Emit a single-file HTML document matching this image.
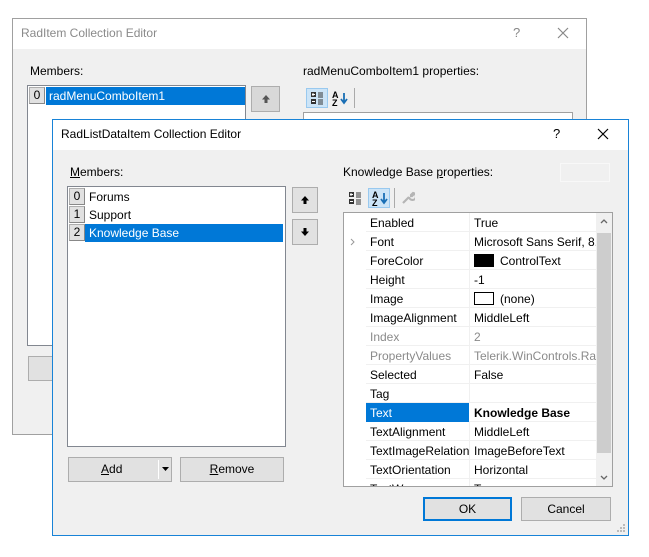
<!DOCTYPE html>
<html><head><meta charset="utf-8"><style>
*{box-sizing:border-box;margin:0;padding:0}
body{width:649px;height:557px;background:#fff;position:relative;overflow:hidden;font-family:"Liberation Sans",sans-serif;font-size:12px;color:#000}
.a{position:absolute}
.btn{position:absolute;background:#e1e1e1;border:1px solid #adadad;text-align:center;line-height:22px}
.idx{position:absolute;left:1px;width:16px;height:17px;background:#e1e1e1;border:1px solid #adadad;border-right-color:#888;border-bottom-color:#888;text-align:center;line-height:15px}
.row{position:absolute;left:22px;right:16px;height:19px;border-bottom:1px solid #f0f0f0}
.row .n{position:absolute;left:4px;top:3px}
.row .v{position:absolute;left:108px;top:3px;white-space:nowrap;overflow:hidden;width:122px}
.row .sep{position:absolute;left:103px;top:0;bottom:0;width:1px;background:#f0f0f0}
.g{color:#8a8a8a}
svg{display:block}
</style></head><body>
<!-- outer dialog -->
<div class="a" style="left:12px;top:18px;width:575px;height:417px;background:#f0f0f0;border:1px solid #a0a0a0"></div>
<div class="a" style="left:13px;top:19px;width:573px;height:30px;background:#fff"></div>
<div class="a" style="left:21px;top:26px;color:#8a8a8a;font-size:12px">RadItem Collection Editor</div>
<div class="a" style="left:513px;top:25px;color:#888;font-size:13px">?</div>
<svg class="a" style="left:557px;top:27px" width="12" height="12"><path d="M1 1L11 11M11 1L1 11" stroke="#888" stroke-width="1.2"/></svg>
<div class="a" style="left:30px;top:64px">Members:</div>
<div class="a" style="left:27px;top:85px;width:219px;height:261px;background:#fff;border:1px solid #828790"></div>
<div class="idx" style="left:29px;top:87px">0</div>
<div class="a" style="left:46px;top:87px;width:199px;height:18px;background:#0078d7;color:#fff;padding:2px 3px">radMenuComboItem1</div>
<div class="btn" style="left:251px;top:86px;width:29px;height:26px;background:#d8d8d8"><svg class="a" style="left:9px;top:7px" width="10" height="10"><path d="M5 1L9 5.5H6.5V9H3.5V5.5H1Z" fill="#555"/></svg></div>
<div class="btn" style="left:28px;top:356px;width:30px;height:25px"></div>
<div class="a" style="left:303px;top:64px">radMenuComboItem1 properties:</div>
<div class="a" style="left:306px;top:88px;width:22px;height:20px;background:#cce4f7;border:1px solid #99c9ef"></div>
<svg class="a" style="left:310px;top:91px" width="14" height="14"><path d="M1 1h5v5H1zM1 8h5v5H1z" fill="#333"/><path d="M3 2v3M2 3.5h3M2 10.5h3" stroke="#fff"/><path d="M8 2h5M8 4h5M8 6h5M8 9h5M8 11h5M8 13h5" stroke="#333"/></svg>
<div class="a" style="left:332px;top:91px;font-size:9px;font-weight:bold;line-height:8px">A<br>Z</div>
<svg class="a" style="left:340px;top:93px" width="8" height="12"><path d="M4 0V9M1 6L4 10L7 6" stroke="#1a6fb5" stroke-width="1.8" fill="none"/></svg>
<div class="a" style="left:354px;top:88px;width:1px;height:20px;background:#aaa"></div>
<div class="a" style="left:303px;top:112px;width:270px;height:20px;background:#fff;border:1px solid #a0a0a0"></div>

<!-- inner dialog -->
<div class="a" style="left:52px;top:119px;width:577px;height:417px;background:#f0f0f0;border:1px solid #1883d7"></div>
<div class="a" style="left:53px;top:120px;width:575px;height:30px;background:#fff"></div>
<div class="a" style="left:61px;top:127px;font-size:12px">RadListDataItem Collection Editor</div>
<div class="a" style="left:553px;top:126px;font-size:13px">?</div>
<svg class="a" style="left:597px;top:128px" width="12" height="12"><path d="M1 1L11 11M11 1L1 11" stroke="#000" stroke-width="1.2"/></svg>
<div class="a" style="left:70px;top:165px"><u>M</u>embers:</div>
<div class="a" style="left:67px;top:186px;width:219px;height:261px;background:#fff;border:1px solid #828790"></div>
<div class="idx" style="left:69px;top:188px">0</div><div class="a" style="left:89px;top:190px">Forums</div>
<div class="idx" style="left:69px;top:206px">1</div><div class="a" style="left:89px;top:208px">Support</div>
<div class="idx" style="left:69px;top:224px">2</div>
<div class="a" style="left:85px;top:224px;width:198px;height:18px;background:#0078d7;color:#fff;padding:2px 4px">Knowledge Base</div>
<div class="btn" style="left:292px;top:187px;width:26px;height:26px"><svg class="a" style="left:7px;top:7px" width="10" height="10"><path d="M5 1L9 5.5H6.5V9H3.5V5.5H1Z" fill="#000"/></svg></div>
<div class="btn" style="left:292px;top:219px;width:26px;height:26px"><svg class="a" style="left:7px;top:7px" width="10" height="10"><path d="M5 9L9 4.5H6.5V1H3.5V4.5H1Z" fill="#000"/></svg></div>
<div class="btn" style="left:68px;top:457px;width:104px;height:25px;text-align:left;padding-left:32px"><u>A</u>dd</div>
<div class="a" style="left:158px;top:460px;width:1px;height:19px;background:#fff"></div>
<svg class="a" style="left:162px;top:467px" width="7" height="4"><path d="M0 0H7L3.5 4Z" fill="#000"/></svg>
<div class="btn" style="left:180px;top:457px;width:104px;height:25px"><u>R</u>emove</div>
<div class="a" style="left:343px;top:165px">Knowledge Base <u>p</u>roperties:</div>
<div class="a" style="left:560px;top:163px;width:50px;height:19px;border:1px solid #f8f8f8"></div>
<svg class="a" style="left:348px;top:191px" width="14" height="14"><path d="M1 1h5v5H1zM1 8h5v5H1z" fill="#333"/><path d="M3 2v3M2 3.5h3M2 10.5h3" stroke="#fff"/><path d="M8 2h5M8 4h5M8 6h5M8 9h5M8 11h5M8 13h5" stroke="#333"/></svg>
<div class="a" style="left:368px;top:188px;width:22px;height:20px;background:#cce4f7;border:1px solid #99c9ef"></div>
<div class="a" style="left:372px;top:191px;font-size:9px;font-weight:bold;line-height:8px">A<br>Z</div>
<svg class="a" style="left:380px;top:193px" width="8" height="12"><path d="M4 0V9M1 6L4 10L7 6" stroke="#1a6fb5" stroke-width="1.8" fill="none"/></svg>
<div class="a" style="left:394px;top:188px;width:1px;height:20px;background:#aaa"></div>
<svg class="a" style="left:401px;top:191px" width="14" height="14"><path d="M2 12L8 6M8 6A3.5 3.5 0 1 0 12 2L10 4V5H11L13 3" stroke="#b5b5b5" stroke-width="2.2" fill="none"/></svg>
<!-- grid -->
<div class="a" style="left:343px;top:212px;width:270px;height:275px;background:#fff;border:1px solid #a0a0a0;overflow:hidden">
 <div class="row" style="top:0"><span class="n">Enabled</span><span class="sep"></span><span class="v">True</span></div>
 <svg class="a" style="left:6px;top:25px" width="5" height="8"><path d="M1 1L4 4L1 7" stroke="#999" fill="none"/></svg>
 <div class="row" style="top:19px"><span class="n">Font</span><span class="sep"></span><span class="v">Microsoft Sans Serif, 8.25</span></div>
 <div class="row" style="top:38px"><span class="n">ForeColor</span><span class="sep"></span><span class="v"><span style="display:inline-block;width:20px;height:13px;background:#000;vertical-align:-2px;margin-right:6px"></span>ControlText</span></div>
 <div class="row" style="top:57px"><span class="n">Height</span><span class="sep"></span><span class="v">-1</span></div>
 <div class="row" style="top:76px"><span class="n">Image</span><span class="sep"></span><span class="v"><span style="display:inline-block;width:20px;height:13px;border:1px solid #000;vertical-align:-2px;margin-right:6px"></span>(none)</span></div>
 <div class="row" style="top:95px"><span class="n">ImageAlignment</span><span class="sep"></span><span class="v">MiddleLeft</span></div>
 <div class="row g" style="top:114px"><span class="n">Index</span><span class="sep"></span><span class="v">2</span></div>
 <div class="row g" style="top:133px"><span class="n">PropertyValues</span><span class="sep"></span><span class="v">Telerik.WinControls.Rad</span></div>
 <div class="row" style="top:152px"><span class="n">Selected</span><span class="sep"></span><span class="v">False</span></div>
 <div class="row" style="top:171px"><span class="n">Tag</span><span class="sep"></span><span class="v"></span></div>
 <div class="row" style="top:190px"><span class="a" style="left:0;top:0;width:103px;height:19px;background:#0078d7"></span><span class="n" style="color:#fff">Text</span><span class="v" style="font-weight:bold">Knowledge Base</span></div>
 <div class="row" style="top:209px"><span class="n">TextAlignment</span><span class="sep"></span><span class="v">MiddleLeft</span></div>
 <div class="row" style="top:228px"><span class="n">TextImageRelation</span><span class="sep"></span><span class="v">ImageBeforeText</span></div>
 <div class="row" style="top:247px"><span class="n">TextOrientation</span><span class="sep"></span><span class="v">Horizontal</span></div>
 <div class="row" style="top:266px"><span class="n">TextWrap</span><span class="sep"></span><span class="v">True</span></div>
 <div class="a" style="right:0;top:0;width:16px;height:100%;background:#f0f0f0"></div>
 <div class="a" style="right:1px;top:20px;width:14px;height:220px;background:#cdcdcd"></div>
 <svg class="a" style="right:4px;top:6px" width="8" height="5"><path d="M1 4L4 1L7 4" stroke="#666" stroke-width="1.3" fill="none"/></svg>
 <svg class="a" style="right:4px;bottom:6px" width="8" height="5"><path d="M1 1L4 4L7 1" stroke="#666" stroke-width="1.3" fill="none"/></svg>
</div>
<div class="btn" style="left:423px;top:497px;width:89px;height:24px;border:2px solid #0078d7;line-height:20px">OK</div>
<div class="btn" style="left:521px;top:497px;width:90px;height:24px">Cancel</div>
<svg class="a" style="left:617px;top:524px" width="8" height="8"><path d="M6 0h2v2H6zM3 3h2v2H3zM6 3h2v2H6zM0 6h2v2H0zM3 6h2v2H3zM6 6h2v2H6z" fill="#bbb"/></svg>
</body></html>
